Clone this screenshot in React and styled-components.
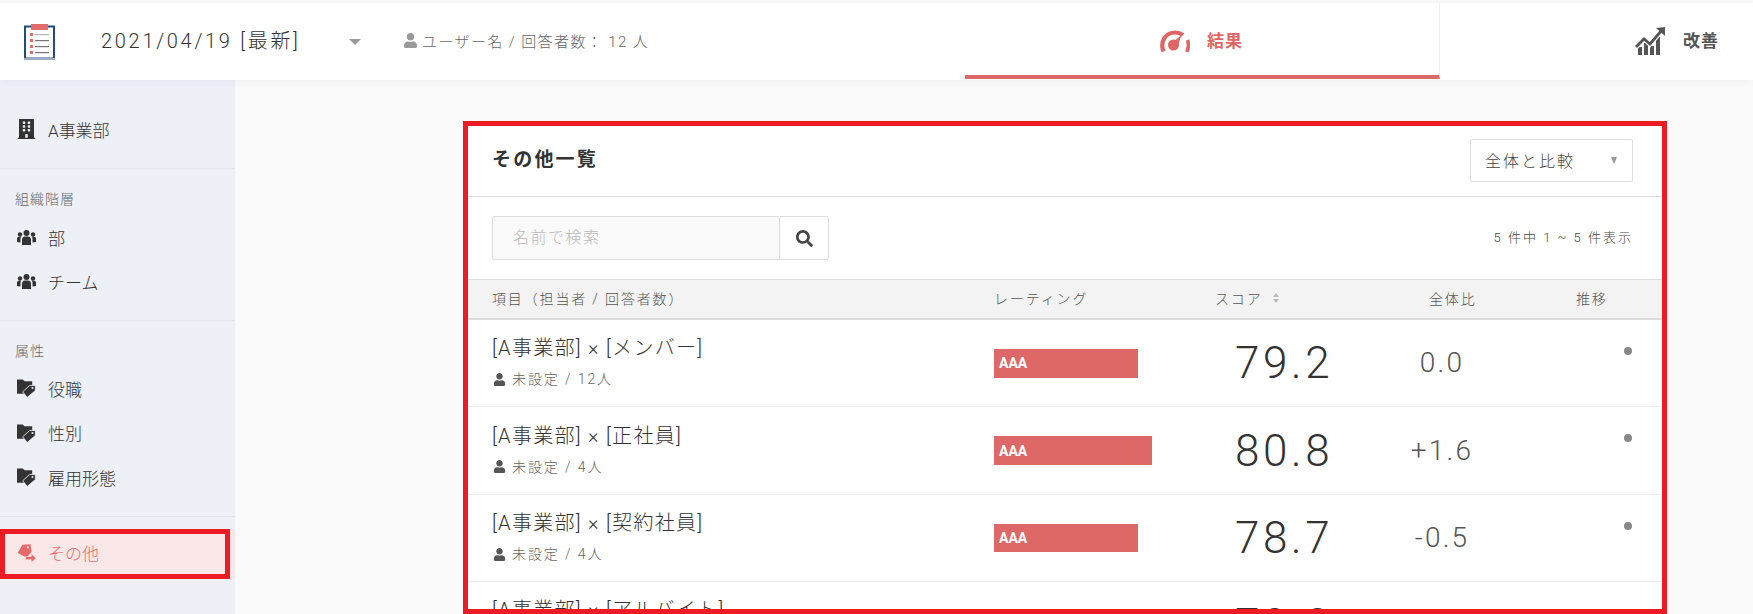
import React from 'react';
import styled, { createGlobalStyle } from 'styled-components';
import { FaBuilding, FaUser, FaSearch } from 'react-icons/fa';

const Global = createGlobalStyle`
  html, body { margin: 0; padding: 0; height: 614px; overflow: hidden; background: #f5f6fa; }
  body { font-family: Roboto, "Noto Sans CJK JP", sans-serif; font-weight: 300; color: #333; }
  * { box-sizing: border-box; }
`;

const Page = styled.div`
  height: 614px; display: flex; flex-direction: column; overflow: hidden; padding-top: 3px; background: #fafafa;
`;
const Header = styled.header`
  height: 77px; flex: none; background: #fff; display: flex; align-items: stretch; position: relative; z-index: 2;
  box-shadow: 0 2px 8px rgba(60, 70, 110, .06);
`;
const Brand = styled.div`
  width: 965px; flex: none; display: flex; align-items: center; padding-left: 24px;
`;
const DateLabel = styled.span`
  font-size: 20px; letter-spacing: 2.7px; margin-left: 46px; width: 248px; color: #333; margin-top: -4px; white-space: nowrap;
`;
const Caret = styled.span`
  width: 0; height: 0; border-left: 6px solid transparent; border-right: 6px solid transparent; border-top: 6px solid #999;
`;
const Meta = styled.span`
  display: flex; align-items: center; gap: 4px; margin-left: 42px; font-size: 15px; letter-spacing: 1.4px; color: #666; margin-top: -3px; white-space: nowrap;
  svg { color: #999; font-size: 15px; }
`;
const Tab = styled.div`
  flex: ${p => (p.$active ? '0 0 475px' : '1')};
  display: flex; align-items: center; gap: ${p => (p.$active ? '17px' : '18px')};
  padding-left: 195px;
  font-size: 17px; font-weight: 700; letter-spacing: 1px;
  color: ${p => (p.$active ? '#e06666' : '#555')};
  border-bottom: ${p => (p.$active ? '4px solid #de6868' : '4px solid transparent')};
  margin-bottom: 1px;
  border-right: ${p => (p.$active ? '1px solid #f0f0f0' : 'none')};
  svg { margin-top: 3px; flex: none; }
`;
const Body = styled.div`
  flex: 1; display: flex; min-height: 0;
`;
const Sidebar = styled.aside`
  width: 235px; flex: none; background: #eef0f8; padding-top: 30px;
`;
const NavItem = styled.div`
  height: ${p => p.$h || 44.5}px; display: flex; align-items: center; gap: 12px; padding: 0 0 2px 17px;
  font-size: 17px; color: #333;
`;
const IconSlot = styled.span`
  width: 19px; display: flex; justify-content: center; color: #333; flex: none;
`;
const Divider = styled.div`
  height: 1px; background: #e4e5ea;
`;
const Group = styled.div`
  padding: ${p => p.$pad || '0'};
`;
const GroupLabel = styled.div`
  font-size: 14px; letter-spacing: 1px; color: #666; padding-left: 15px; height: 20px; line-height: 20px; margin-bottom: ${p => p.$mb}px;
`;
const ActiveWrap = styled.div`
  margin-top: 12px; background: #fae8e8; height: 50px;
`;
const ActiveItem = styled.div`
  width: 230px; height: 50px; border: 5px solid #ed1c24; background: #fae8e8; display: flex; align-items: center;
  gap: 12px; padding: 0 0 3px 12px; font-size: 17px; color: #e56b6b;
`;
const Main = styled.main`
  flex: 1; min-width: 0; padding: 41px 86px 0 228px;
`;
const Card = styled.section`
  height: 493px; border: 5px solid #ed1c24; background: #fff; overflow: hidden;
`;
const CardHead = styled.div`
  height: 71px; display: flex; align-items: center; justify-content: space-between; padding: 0 29px 0 24px; border-bottom: 1px solid #ddd;
`;
const Title = styled.h2`
  margin: -8px 0 0; font-size: 19px; font-weight: 700; letter-spacing: 2.2px; color: #333;
`;
const Select = styled.div`
  width: 163px; height: 43px; margin-top: -2px; border: 1px solid #ddd; border-radius: 2px; display: flex; align-items: center; justify-content: space-between;
  padding: 0 15px 0 14px; font-size: 16px; letter-spacing: 2px; color: #444;
`;
const SmallCaret = styled.span`
  width: 0; height: 0; border-left: 3.5px solid transparent; border-right: 3.5px solid transparent; border-top: 7px solid #999;
`;
const SearchRow = styled.div`
  height: 83px; display: flex; align-items: center; justify-content: space-between; padding: 0 30px 0 24px; border-bottom: 1px solid #ddd;
`;
const SearchBox = styled.div`
  display: flex; height: 44px; width: 337px;
`;
const Input = styled.div`
  flex: 1; background: #fafafa; border: 1px solid #ddd; border-right: none; border-radius: 3px 0 0 3px; padding: 0 0 4px 20px; display: flex; align-items: center;
  font-size: 16px; letter-spacing: 1.5px; color: #bbb;
`;
const SearchBtn = styled.div`
  width: 50px; border: 1px solid #ddd; border-radius: 0 3px 3px 0; background: #fff; display: flex; align-items: center; justify-content: center; color: #444; font-size: 17px;
`;
const Count = styled.div`
  font-size: 13px; letter-spacing: 2px; color: #444; margin: 0 -1px 3px 0;
`;
const cols = '526px 221px 190px 147px 1fr';
const TableHead = styled.div`
  height: 40px; display: grid; grid-template-columns: ${cols}; align-items: center; background: #f3f3f3; border-bottom: 2px solid #ddd;
  font-size: 14px; letter-spacing: 1.85px; color: #555; padding-bottom: 2px;
`;
const Th = styled.div`
  padding-left: ${p => p.$pl || 0}px; display: flex; align-items: center; gap: 10px; white-space: nowrap;
`;
const SortIcon = styled.span`
  display: flex; flex-direction: column; gap: 2px;
  &::before { content: ''; border-left: 3px solid transparent; border-right: 3px solid transparent; border-bottom: 4px solid #bbb; }
  &::after { content: ''; border-left: 3px solid transparent; border-right: 3px solid transparent; border-top: 4px solid #bbb; }
`;
const Row = styled.div`
  height: ${p => p.$h}px; display: grid; grid-template-columns: ${cols}; align-items: center; border-bottom: 1px solid #eee;
`;
const ItemCell = styled.div`
  padding-left: 24px; display: flex; flex-direction: column; gap: 9px; margin-bottom: 3px;
`;
const ItemName = styled.div`
  font-size: 20px; letter-spacing: 1.3px; color: #333; line-height: 26px; white-space: nowrap;
`;
const ItemSub = styled.div`
  display: flex; align-items: center; gap: 6px; font-size: 14px; letter-spacing: 1.9px; color: #666; line-height: 18px;
  svg { color: #555; font-size: 13px; margin-left: 1px; }
`;
const Bar = styled.div`
  height: ${p => p.$h}px; background: #de6868; color: #fff; font-size: 14px; font-weight: 700; display: flex; align-items: center; padding-left: 5px;
`;
const Score = styled.div`
  padding-left: 20px; font-size: 44px; letter-spacing: 3.6px; color: #333; line-height: 1; font-weight: 300;
`;
const Diff = styled.div`
  width: 74px; text-align: center; font-size: 28px; letter-spacing: 2.2px; color: #555; line-height: 1; font-weight: 300;
`;
const Dot = styled.div`
  justify-self: end; align-self: start; width: 8px; height: 8px; border-radius: 50%; background: #888; margin: 27px 30px 0 0;
`;

const Clipboard = () => (
  <svg width="31" height="36" viewBox="0 0 31 36">
    <rect x="1" y="2.5" width="29" height="32" fill="#fff" stroke="#234d78" strokeWidth="2" />
    <rect x="0" y="34" width="31" height="1.5" fill="#9db2c6" />
    <rect x="7" y="0" width="17" height="6" fill="#e06c6c" />
    {[10, 16, 22, 28].map(y => (
      <g key={y}>
        <rect x="6" y={y - 1} width="3" height="3" fill="#e06c6c" />
        <rect x="11" y={y} width="14" height="1.2" fill={y === 10 ? '#b5b5b5' : '#777'} />
      </g>
    ))}
  </svg>
);
const Gauge = () => (
  <svg width="30" height="22" viewBox="0 0 30 22" fill="none">
    <path d="M3.500 21.500C-.5 11 6 2.500 15 2.500c3 0 6 1 8 2.500" stroke="#e06666" strokeWidth="4.200" />
    <path d="M27.500 10c1.500 4 1.200 8-.8 12" stroke="#e06666" strokeWidth="3.600" />
    <circle cx="13.500" cy="15" r="5.500" fill="#e06666" />
    <path d="M13 12l8.500-7-3.500 10.500z" fill="#e06666" />
  </svg>
);
const Trend = () => (
  <svg width="30" height="28" viewBox="0 0 30 28" fill="#555">
    <rect x="3" y="20" width="4" height="8" />
    <rect x="9" y="16" width="4" height="12" />
    <rect x="15" y="19" width="4" height="9" />
    <rect x="21" y="10" width="4" height="18" />
    <path d="M1 20l8-8 6 5L27 3" fill="none" stroke="#fff" strokeWidth="5" />
    <path d="M1 20l8-8 6 5L27 3" fill="none" stroke="#555" strokeWidth="2.800" />
    <path d="M21 1l9-1v9z" />
  </svg>
);
const Team = () => (
  <svg width="19" height="15" viewBox="0 0 19 15" fill="#333">
    <circle cx="9.500" cy="3" r="3" />
    <path d="M5 15V9.500C5 7.500 6.500 6.500 8 6.500h3c1.500 0 3 1 3 3V15c-2.500 1-6.500 1-9 0z" />
    <circle cx="3" cy="4.500" r="2.200" />
    <path d="M0 12V8.500c0-1 1-1.700 2-1.700h2c-.4.700-.5 1.500-.5 2.500v3.200z" />
    <circle cx="16" cy="4.500" r="2.200" />
    <path d="M19 12V8.500c0-1-1-1.700-2-1.700h-2c.4.700.5 1.500.5 2.500v3.200z" />
  </svg>
);
const FolderTag = () => (
  <svg width="20" height="20" viewBox="0 0 20 20">
    <path d="M0 1h6l2 2h8v5l-9 6 1 2H0z" fill="#333" />
    <path d="M13.300 7.300h6v5.400L10.700 20 6 14z" fill="#333" stroke="#eef0f8" strokeWidth=".9" />
    <circle cx="16.300" cy="10" r="1.100" fill="#eef0f8" />
  </svg>
);
const TagArrow = () => (
  <svg width="20" height="20" viewBox="0 0 20 20" fill="#e56b6b">
    <path d="M5.600 1.300L14.300.7 15.300 9 10 14.700.7 10z" />
    <circle cx="11.500" cy="4" r="1.200" fill="#fae8e8" />
    <path d="M9 13.700h6v-3l5 4.800-5 4.500v-3H9z" stroke="#fae8e8" strokeWidth=".6" />
  </svg>
);

const rows = [
  { name: '[A事業部] × [メンバー]', sub: '未設定 / 12人', bar: 144, barH: 29, score: '79.2', diff: '0.0', h: 87 },
  { name: '[A事業部] × [正社員]', sub: '未設定 / 4人', bar: 158, barH: 29, score: '80.8', diff: '+1.6', h: 88 },
  { name: '[A事業部] × [契約社員]', sub: '未設定 / 4人', bar: 144, barH: 28, score: '78.7', diff: '-0.5', h: 87 },
  { name: '[A事業部] × [アルバイト]', sub: '未設定 / 2人', bar: 144, barH: 29, score: '79.0', diff: '-0.2', h: 87 },
];

export default function App() {
  return (
    <>
      <Global />
      <Page>
        <Header>
          <Brand>
            <Clipboard />
            <DateLabel>2021/04/19 [最新]</DateLabel>
            <Caret />
            <Meta><FaUser />ユーザー名 / 回答者数： 12 人</Meta>
          </Brand>
          <Tab $active><Gauge />結果</Tab>
          <Tab><Trend />改善</Tab>
        </Header>
        <Body>
          <Sidebar>
            <NavItem $h={40}><IconSlot><FaBuilding size={20} /></IconSlot>A事業部</NavItem>
            <Group $pad="18px 0 0"><Divider /></Group>
            <Group $pad="20px 0 15px">
              <GroupLabel $mb={7}>組織階層</GroupLabel>
              <NavItem><IconSlot><Team /></IconSlot>部</NavItem>
              <NavItem><IconSlot><Team /></IconSlot>チーム</NavItem>
            </Group>
            <Divider />
            <Group $pad="20px 0 15.5px">
              <GroupLabel $mb={6}>属性</GroupLabel>
              <NavItem><IconSlot><FolderTag /></IconSlot>役職</NavItem>
              <NavItem><IconSlot><FolderTag /></IconSlot>性別</NavItem>
              <NavItem><IconSlot><FolderTag /></IconSlot>雇用形態</NavItem>
            </Group>
            <Divider />
            <ActiveWrap>
              <ActiveItem><IconSlot><TagArrow /></IconSlot>その他</ActiveItem>
            </ActiveWrap>
          </Sidebar>
          <Main>
            <Card>
              <CardHead>
                <Title>その他一覧</Title>
                <Select>全体と比較<SmallCaret /></Select>
              </CardHead>
              <SearchRow>
                <SearchBox>
                  <Input>名前で検索</Input>
                  <SearchBtn><FaSearch /></SearchBtn>
                </SearchBox>
                <Count>5 件中 1 ~ 5 件表示</Count>
              </SearchRow>
              <TableHead>
                <Th $pl={24}>項目（担当者 / 回答者数）</Th>
                <Th>レーティング</Th>
                <Th>スコア<SortIcon /></Th>
                <Th $pl={24}>全体比</Th>
                <Th $pl={24}>推移</Th>
              </TableHead>
              {rows.map(r => (
                <Row key={r.name} $h={r.h}>
                  <ItemCell>
                    <ItemName>{r.name}</ItemName>
                    <ItemSub><FaUser />{r.sub}</ItemSub>
                  </ItemCell>
                  <Bar $h={r.barH} style={{ width: r.bar }}>AAA</Bar>
                  <Score>{r.score}</Score>
                  <Diff>{r.diff}</Diff>
                  <Dot />
                </Row>
              ))}
            </Card>
          </Main>
        </Body>
      </Page>
    </>
  );
}
